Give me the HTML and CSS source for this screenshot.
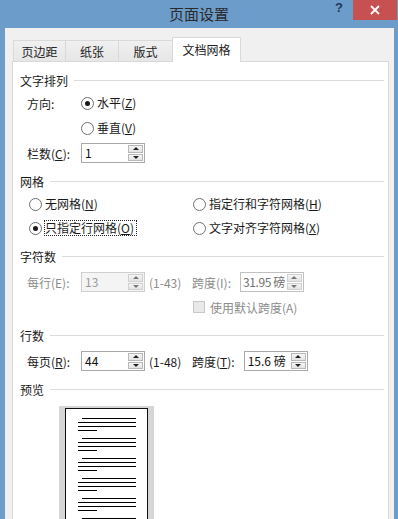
FILE: index.html
```html
<!DOCTYPE html>
<html lang="zh-CN">
<head>
    <meta charset="UTF-8">
    <title>页面设置</title>
    <link rel="stylesheet" href="styles.css">
</head>
<body>
    <div class="window">
        <div class="titlebar">
            <span class="title">页面设置</span>
            <div class="caption-buttons">
                <span class="help">?</span>
                <span class="close">
                    <svg width="10" height="10" viewBox="0 0 10 10"><path d="M1 1L9 9M9 1L1 9" stroke="#fff" stroke-width="1.8"/></svg>
                </span>
            </div>
        </div>

        <div class="client">
            <div class="tabs">
                <div class="tab t1">页边距</div>
                <div class="tab t2">纸张</div>
                <div class="tab t3">版式</div>
                <div class="tab active">文档网格</div>
            </div>

            <div class="panel">
                <section class="group">
                    <div class="group-title">文字排列</div>
                    <div class="row indent">
                        <span class="label">方向:</span>
                        <label class="radio"><span class="mark on"></span><span class="text">水平(<u>Z</u>)</span></label>
                    </div>
                    <div class="row indent">
                        <span class="label"></span>
                        <label class="radio"><span class="mark"></span><span class="text">垂直(<u>V</u>)</span></label>
                    </div>
                    <div class="row indent">
                        <span class="label">栏数(<u>C</u>):</span>
                        <div class="spin">
                            <span class="value">1</span>
                            <span class="arrows"><i class="up"></i><i class="down"></i></span>
                        </div>
                    </div>
                </section>

                <section class="group">
                    <div class="group-title">网格</div>
                    <div class="row options">
                        <label class="radio col"><span class="mark"></span><span class="text">无网格(<u>N</u>)</span></label>
                        <label class="radio"><span class="mark"></span><span class="text">指定行和字符网格(<u>H</u>)</span></label>
                    </div>
                    <div class="row options">
                        <label class="radio col"><span class="mark on"></span><span class="text focus">只指定行网格(<u>O</u>)</span></label>
                        <label class="radio"><span class="mark"></span><span class="text">文字对齐字符网格(<u>X</u>)</span></label>
                    </div>
                </section>

                <section class="group disabled">
                    <div class="group-title">字符数</div>
                    <div class="row indent field">
                        <span class="label">每行(E):</span>
                        <div class="spin off">
                            <span class="value">13</span>
                            <span class="arrows"><i class="up"></i><i class="down"></i></span>
                        </div>
                        <span class="range">(1-43)</span>
                        <span class="label2">跨度(I):</span>
                        <div class="spin half">
                            <span class="value">31.95 磅</span>
                            <span class="arrows"><i class="up"></i><i class="down"></i></span>
                        </div>
                    </div>
                    <div class="row check-row">
                        <span class="check"></span>
                        <span>使用默认跨度(A)</span>
                    </div>
                </section>

                <section class="group">
                    <div class="group-title">行数</div>
                    <div class="row indent field">
                        <span class="label">每页(<u>R</u>):</span>
                        <div class="spin">
                            <span class="value">44</span>
                            <span class="arrows"><i class="up"></i><i class="down"></i></span>
                        </div>
                        <span class="range">(1-48)</span>
                        <span class="label2">跨度(<u>T</u>):</span>
                        <div class="spin">
                            <span class="value">15.6 磅</span>
                            <span class="arrows"><i class="up"></i><i class="down"></i></span>
                        </div>
                    </div>
                </section>

                <section class="group">
                    <div class="group-title">预览</div>
                    <div class="preview">
                        <div class="page">
                            <div class="para"><i class="first"></i><i></i><i></i><i class="last"></i></div>
                            <div class="para"><i class="first"></i><i></i><i></i><i class="last"></i></div>
                            <div class="para"><i class="first"></i><i></i><i></i><i class="last"></i></div>
                            <div class="para"><i class="first"></i><i></i><i></i><i class="last"></i></div>
                            <div class="para"><i class="first"></i><i></i><i></i><i class="last"></i></div>
                            <div class="para"><i class="first"></i><i></i><i></i><i class="last"></i></div>
                        </div>
                    </div>
                </section>
            </div>
        </div>
    </div>
</body>
</html>
```

FILE: styles.css
```css
* {
    box-sizing: border-box;
}
body {
    margin: 0;
    font-family: "Noto Sans CJK SC", "Microsoft YaHei", sans-serif;
    font-size: 12px;
    color: #1a1a1a;
    overflow: hidden;
}
u {
    text-underline-offset: 1px;
}
.window {
    width: 398px;
    height: 519px;
    background: #6c9cc9;
    display: flex;
    flex-direction: column;
    overflow: hidden;
}
.titlebar {
    height: 28px;
    flex: none;
    display: grid;
    grid-template-columns: 1fr auto 1fr;
    align-items: start;
}
.title {
    grid-column: 2;
    line-height: 28px;
    font-size: 15px;
    color: #2a2a2a;
}
.caption-buttons {
    grid-column: 3;
    justify-self: end;
    display: flex;
    margin-right: 1px;
}
.help {
    width: 28px;
    height: 20px;
    line-height: 20px;
    text-align: center;
    font: bold 13px "Liberation Sans", sans-serif;
    color: #1d3a5c;
}
.close {
    width: 44px;
    height: 20px;
    background: #c75050;
    display: flex;
    align-items: center;
    justify-content: center;
}
.client {
    flex: 1;
    min-height: 0;
    margin: 0 4px 0 5px;
    background: #f0f0f0;
    padding: 9px 5px 0 7px;
    display: flex;
    flex-direction: column;
}
.tabs {
    height: 24px;
    flex: none;
    display: flex;
    align-items: flex-end;
    padding-left: 1px;
}
.tab {
    height: 21px;
    border: 1px solid #d9d9d9;
    border-bottom: none;
    border-right: none;
    background: linear-gradient(#f0f0f0, #e6e6e6);
    display: flex;
    align-items: center;
    justify-content: center;
    color: #222;
}
.t1 { width: 52px; }
.t2 { width: 53px; }
.t3 { width: 54px; }
.tab.active {
    width: 69px;
    height: 25px;
    margin-bottom: -1px;
    border-right: 1px solid #d9d9d9;
    background: #fff;
    position: relative;
    z-index: 1;
    padding-bottom: 2px;
}
.panel {
    flex: 1;
    background: #fff;
    border: 1px solid #d9d9d9;
    padding: 10px 4px 0 7px;
}
.group {
    margin-top: 10px;
}
.group:first-child {
    margin-top: 0;
}
.group-title {
    height: 16px;
    display: flex;
    align-items: center;
    gap: 6px;
}
.group-title::after {
    content: "";
    flex: 1;
    height: 1px;
    background: #dcdcdc;
}
.row {
    height: 20px;
    margin-top: 5px;
    display: flex;
    align-items: center;
}
.row.field {
    margin-top: 8px;
}
.indent {
    padding-left: 7px;
}
.label {
    width: 54px;
    flex: none;
}
.radio {
    display: inline-flex;
    align-items: center;
    gap: 2px;
}
.radio.col {
    width: 164px;
}
.options {
    padding-left: 9px;
}
.options + .options {
    margin-top: 4px;
}
.mark {
    width: 13px;
    height: 13px;
    border: 1px solid #707070;
    border-radius: 50%;
    background: #fff;
    display: grid;
    place-items: center;
}
.mark.on::after {
    content: "";
    width: 5px;
    height: 5px;
    border-radius: 50%;
    background: #1a1a1a;
}
.radio .text {
    border: 1px dotted transparent;
    padding-right: 2px;
    line-height: 14px;
}
.radio .text.focus {
    border-color: #222;
}
.spin {
    width: 64px;
    height: 20px;
    flex: none;
    border: 1px solid #a9a9a9;
    background: #fff;
    display: flex;
}
.spin .value {
    flex: 1;
    padding-left: 3px;
    line-height: 18px;
    white-space: nowrap;
    color: #111;
}
.arrows {
    width: 16px;
    flex: none;
    display: flex;
    flex-direction: column;
    gap: 1px;
    padding: 1px 1px 1px 0;
}
.arrows i {
    flex: 1;
    border: 1px solid #b8b8b8;
    background: linear-gradient(#f6f6f6, #e3e3e3);
    display: grid;
    place-items: center;
}
.arrows i::after {
    content: "";
    border-left: 3px solid transparent;
    border-right: 3px solid transparent;
}
.arrows .up::after {
    border-bottom: 3px solid #222;
}
.arrows .down::after {
    border-top: 3px solid #222;
}
.range {
    width: 43px;
    margin-left: 4px;
    flex: none;
}
.label2 {
    margin-right: 9px;
}
.disabled .row {
    color: #8c8c8c;
}
.spin.off {
    border-color: #d0d0d0;
    background: #f4f4f4;
}
.spin.off .value {
    color: #9a9a9a;
}
.spin.half {
    border-color: #c0c0c0;
}
.spin.half .value {
    color: #6f6f6f;
    padding-left: 2px;
    letter-spacing: -0.4px;
}
.spin.off .arrows i,
.spin.half .arrows i {
    border-color: #d0d0d0;
}
.spin.off .up::after,
.spin.half .up::after {
    border-bottom-color: #777;
}
.spin.off .down::after,
.spin.half .down::after {
    border-top-color: #777;
}
.check-row {
    padding-left: 173px;
    gap: 5px;
}
.check {
    width: 12px;
    height: 12px;
    border: 1px solid #c8c8c8;
    background: #e9e9e9;
}
.preview {
    margin: 9px 0 0 39px;
    width: 95px;
    height: 130px;
    background: #d6d6d6;
    padding: 2px 6px 0;
}
.page {
    height: 100%;
    background: #fff;
    border: 1px solid #111;
    border-bottom: none;
    padding: 9px 11px 0 12px;
}
.para {
    display: flex;
    flex-direction: column;
    gap: 3px;
    margin-bottom: 7px;
}
.para i {
    display: block;
    height: 1px;
    background: #000;
}
.para i.first {
    margin-left: 4px;
}
.para i.last {
    width: 19px;
}
```
